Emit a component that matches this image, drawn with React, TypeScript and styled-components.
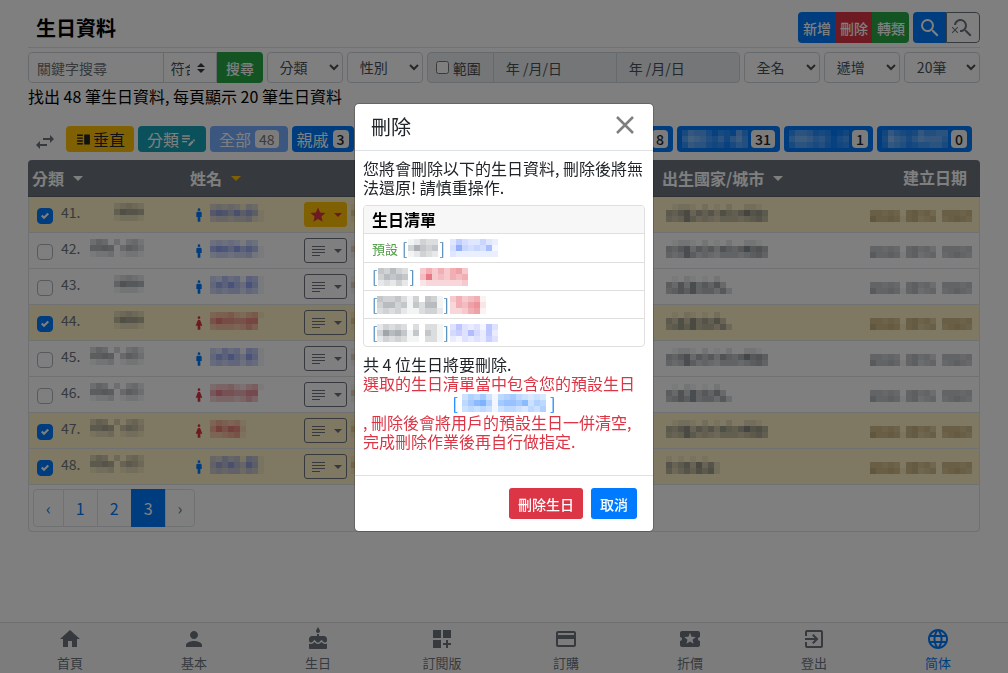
import React from 'react';
import styled, { createGlobalStyle, css } from 'styled-components';
import {
  MdArrowDropDown,
  MdCake,
  MdCreditCard,
  MdDashboardCustomize,
  MdEditNote,
  MdExitToApp,
  MdHome,
  MdLanguage,
  MdLocalActivity,
  MdMan,
  MdPerson,
  MdSearch,
  MdSearchOff,
  MdStar,
  MdSwapHoriz,
  MdVerticalSplit,
  MdWoman,
} from 'react-icons/md';

const blue = '#007bff';
const red = '#dc3545';
const green = '#28a745';
const yellow = '#ffc107';
const teal = '#17a2b8';
const gray = '#6c757d';
const line = '#dee2e6';
const field = '#ced4da';

const GlobalStyle = createGlobalStyle`
  * { box-sizing: border-box; }
  body {
    margin: 0;
    background: #fff;
    color: #212529;
    font: 400 16px/24px "Noto Sans CJK TC", sans-serif;
  }
  button, input, select { font-family: inherit; margin: 0; }
  button { cursor: pointer; }
`;

/* ---------- censored text ---------- */

type MosaicProps = { rows: string[]; color: string };

/* Each hex digit is one cell; its value is the strength of the colour. */
const Mosaic = ({ rows, color }: MosaicProps) => (
  <MosaicSvg
    width={rows[0].length * 6}
    height={rows.length * 6}
    fill={color}
    shapeRendering="crispEdges"
    aria-hidden="true"
  >
    {rows.flatMap((row, y) =>
      row.split('').map((c, x) => (
        <rect key={`${x}-${y}`} x={x * 6} y={y * 6} width="6" height="6" opacity={parseInt(c, 16) / 15} />
      )),
    )}
  </MosaicSvg>
);

const MosaicSvg = styled.svg`
  display: block;
  flex: none;
`;

const ink = '#4d565e';
const categoryShort = ['23432', '58776', '12221'];
const categoryLong = ['354030342', '667604653', '122301221'];
const nameBlue = ['343431430', '798696861', '344344521'];
const nameBlueB = ['436451651', '586964961', '454553541'];
const nameRed = ['344532451', '697766880', '344434640'];
const nameRedB = ['354341', '596982', '334561'];
const countryLong = ['01221020102002210', '6579475748657a786', '54596454355545675'];
const countryMid = ['01021010200', '64849575840', '56869566473'];
const countryShort = ['101010100', '746849472', '635758682'];
const dateCells = ['66565067564066656', '86676167456056765'];
const sliver = ['121', '474', '121'];

/* ---------- page ---------- */

const Page = styled.main`
  padding: 12px 28px 80px;
`;

const Header = styled.header`
  display: flex;
  align-items: center;
  justify-content: space-between;
  padding-bottom: 4px;
  border-bottom: 1px solid #e5e5e5;
`;

const Title = styled.h1`
  margin: 0;
  padding-left: 8px;
  font-size: 20px;
  line-height: 31px;
  font-weight: 700;
  color: #000;
`;

const Actions = styled.div`
  display: flex;
  gap: 4px;
`;

const Group = styled.div`
  display: flex;
  border-radius: 4px;
  overflow: hidden;
`;

const ActionButton = styled.button<{ $color: string }>`
  height: 31px;
  padding: 0 4px 0 5px;
  border: 0;
  background: ${(p) => p.$color};
  color: #fff;
  font-size: 14px;
  font-weight: 500;
`;

const IconButton = styled.button<{ $outline?: boolean }>`
  display: grid;
  place-items: center;
  width: ${(p) => (p.$outline ? 34 : 33)}px;
  height: 31px;
  padding: 0;
  border: ${(p) => (p.$outline ? `1px solid ${gray}` : '0')};
  border-radius: ${(p) => (p.$outline ? '0 4px 4px 0' : '0')};
  background: ${(p) => (p.$outline ? '#fff' : blue)};
  color: ${(p) => (p.$outline ? gray : '#fff')};
`;

/* ---------- filters ---------- */

const Filters = styled.form`
  display: flex;
  gap: 4px;
  margin-top: 4px;
`;

const SearchGroup = styled(Group)`
  flex: 234 1 234px;
`;

const boxed = css`
  height: 31px;
  border: 1px solid ${field};
  background: #fff;
  color: #495057;
  font-size: 14px;
`;

const Keyword = styled.input`
  ${boxed}
  flex: 1;
  min-width: 0;
  padding: 0 8px;
  border-radius: 4px 0 0 4px;
  &::placeholder { color: ${gray}; }
`;

const MatchWrap = styled.div`
  position: relative;
  width: 54px;
  margin-left: -1px;
`;

const Match = styled.select`
  ${boxed}
  width: 100%;
  padding: 0 26px 0 7px;
  appearance: none;
  border-radius: 0;
`;

const MatchArrow = styled.svg`
  position: absolute;
  right: 12px;
  top: 11px;
  pointer-events: none;
`;

const SearchButton = styled(ActionButton)`
  width: 46px;
`;

const Select = styled.select`
  ${boxed}
  flex: 76 1 76px;
  min-width: 0;
  padding: 3px 0 5px 8px;
  border-radius: 4px;
`;

const RangeGroup = styled(Group)`
  flex: 312 1 312px;
`;

const RangeLabel = styled.label`
  ${boxed}
  display: flex;
  align-items: center;
  gap: 4px;
  width: 67px;
  padding: 0 8px;
  border-radius: 4px 0 0 4px;
  background: #e9ecef;
`;

const DateInput = styled.input`
  ${boxed}
  flex: 1;
  min-width: 0;
  margin-left: -1px;
  padding: 0 12px;
  border-radius: 0;
  background: #e9ecef;
  &:last-child { border-radius: 0 4px 4px 0; }
`;

const Summary = styled.p`
  margin: 1px 0 0;
  color: #000;
`;

/* ---------- category chips ---------- */

const Chips = styled.nav`
  display: flex;
  align-items: center;
  gap: 4px;
  margin-top: 18px;
  padding: 0 8px 0 5px;
`;

const SwapIcon = styled.span`
  display: flex;
  width: 29px;
  height: 26px;
  padding-top: 4px;
  color: ${gray};
`;

const Chip = styled.button<{ $color: string; $dark?: boolean; $wide?: boolean; $icon?: boolean; $grow?: boolean }>`
  display: flex;
  align-items: center;
  justify-content: ${(p) => (p.$grow ? 'space-between' : 'center')};
  gap: ${(p) => (p.$icon ? 1 : 4)}px;
  flex: ${(p) => (p.$grow ? '1 1 0' : 'none')};
  height: 26px;
  padding: 0 ${(p) => (p.$wide ? 9 : 5)}px;
  border: 0;
  border-radius: 4px;
  background: ${(p) => p.$color};
  color: ${(p) => (p.$dark ? '#212529' : '#fff')};
  font-size: 16px;
  & > svg + span { margin-left: -1px; }
`;

const Badge = styled.span<{ $muted?: boolean }>`
  padding: 0 4px;
  border-radius: 4px;
  background: #f8f9fa;
  color: ${(p) => (p.$muted ? '#777' : '#212529')};
  font-size: 14px;
  line-height: 18px;
  font-weight: ${(p) => (p.$muted ? 400 : 500)};
`;

/* ---------- table ---------- */

const Table = styled.table`
  width: 100%;
  margin-top: 8px;
  table-layout: fixed;
  border-collapse: separate;
  border-spacing: 0;
`;

const HeadCell = styled.th<{ $width?: number; $right?: boolean }>`
  width: ${(p) => (p.$width ? `${p.$width}px` : 'auto')};
  height: 37px;
  padding: 0 ${(p) => (p.$right ? 13 : 4)}px 0 4px;
  background: ${gray};
  border-bottom: 1px solid #5a6268;
  color: #fff;
  font-weight: 700;
  text-align: ${(p) => (p.$right ? 'right' : 'left')};
  &:first-child { border-top-left-radius: 4px; }
  &:last-child { border-top-right-radius: 4px; padding-bottom: 3px; }
`;

const Sort = styled.span<{ $active?: boolean }>`
  display: flex;
  align-items: center;
  gap: 2px;
  svg { color: ${(p) => (p.$active ? yellow : '#fff')}; }
`;

const Row = styled.tr<{ $selected: boolean }>`
  background: ${(p) => (p.$selected ? '#fff0c4' : '#fff')};
`;

const Cell = styled.td`
  height: 36px;
  padding: 0 8px;
  border-bottom: 1px solid ${line};
  &:first-child { border-left: 1px solid ${line}; }
  &:last-child { border-right: 1px solid ${line}; }
`;

const DetailCell = styled(Cell)`
  padding: 0 0 4px 1px;
`;

const CountryCell = styled(Cell)`
  padding-bottom: 4px;
`;

const DateCell = styled(Cell)`
  padding: 2px 7px 0 0;
  & > svg { margin-left: auto; }
`;

const CategoryCell = styled.label`
  display: flex;
  align-items: center;
  width: 107px;
  padding-bottom: 5px;
  color: ${gray};
  font-size: 14px;
  & > svg { margin-left: auto; }
`;

const CheckWrap = styled.span`
  position: relative;
  display: block;
  width: 16px;
  height: 16px;
  margin: 8px 8px 0 0;
`;

const CheckInput = styled.input`
  appearance: none;
  display: block;
  width: 16px;
  height: 16px;
  border: 1px solid #adb5bd;
  border-radius: 4px;
  background: #fff;
  &:checked { background: ${blue}; border-color: ${blue}; }
`;

const CheckMark = styled.svg`
  position: absolute;
  left: 4px;
  top: 4px;
  pointer-events: none;
`;

const NameCell = styled.div<{ $color: string }>`
  display: flex;
  align-items: center;
  gap: 3px;
  margin-left: -3px;
  padding-bottom: 4px;
  color: ${(p) => p.$color};
`;

const Figure = styled.span`
  display: flex;
  padding-top: 4px;
`;

const MenuButton = styled.button<{ $star?: boolean }>`
  display: flex;
  align-items: center;
  justify-content: space-between;
  width: 43px;
  height: 25px;
  padding: 0 4px 0 ${(p) => (p.$star ? 4 : 7)}px;
  border: 1px solid ${(p) => (p.$star ? yellow : gray)};
  border-radius: 3px;
  background: ${(p) => (p.$star ? yellow : 'transparent')};
  color: ${(p) => (p.$star ? red : gray)};
`;

const TableFooter = styled.div`
  padding: 4px;
  border: 1px solid ${line};
  border-top: 0;
  border-radius: 0 0 4px 4px;
`;

const Pages = styled.nav`
  display: flex;
`;

const PageLink = styled.a<{ $active?: boolean; $muted?: boolean }>`
  padding: 8px 12px;
  border: 1px solid ${(p) => (p.$active ? blue : line)};
  background: ${(p) => (p.$active ? blue : '#fff')};
  color: ${(p) => (p.$active ? '#fff' : p.$muted ? gray : blue)};
  line-height: 20px;
  text-decoration: none;
  & + & { margin-left: -1px; }
  &:first-child { border-radius: 4px 0 0 4px; }
  &:last-child { border-radius: 0 4px 4px 0; }
`;

/* ---------- bottom navigation ---------- */

const BottomNav = styled.nav`
  position: fixed;
  inset: auto 0 0;
  display: flex;
  height: 51px;
  padding: 4px 8px 0;
  background: #f8f9fa;
  border-top: 1px solid #dfdfdf;
`;

const NavItem = styled.a<{ $active?: boolean }>`
  flex: 1;
  display: flex;
  flex-direction: column;
  align-items: center;
  gap: 3px;
  color: ${(p) => (p.$active ? blue : gray)};
  font-size: 13px;
  line-height: 18px;
  text-decoration: none;
`;

/* ---------- dialog ---------- */

const Backdrop = styled.div`
  position: fixed;
  inset: 0;
  z-index: 10;
  display: flex;
  justify-content: center;
  align-items: flex-start;
  padding-top: 103px;
  background: rgba(0, 0, 0, 0.5);
`;

const Dialog = styled.section`
  width: 300px;
  background: #fff;
  background-clip: padding-box;
  border: 1px solid rgba(0, 0, 0, 0.2);
  border-radius: 5px;
`;

const DialogHeader = styled.header`
  display: flex;
  justify-content: space-between;
  align-items: center;
  padding: 8px 16px;
  border-bottom: 1px solid ${line};
`;

const DialogTitle = styled.h2`
  margin: 0;
  font-size: 20px;
  line-height: 30px;
  font-weight: 400;
`;

const Close = styled.button`
  display: grid;
  padding: 0 3px 4px;
  border: 0;
  background: none;
  color: #7f7f7f;
`;

const DialogBody = styled.div`
  padding: 8px 8px 24px;
  line-height: 19px;
`;

const Text = styled.p<{ $danger?: boolean }>`
  margin: 0;
  color: ${(p) => (p.$danger ? red : '#212529')};
`;

const List = styled.div`
  margin: 8px 0;
  border: 1px solid #dfdfdf;
  border-radius: 4px;
  overflow: hidden;
`;

const ListTitle = styled.h3`
  margin: 0;
  padding: 0 8px;
  background: #f7f7f7;
  color: #000;
  font-size: 16px;
  line-height: 27px;
  font-weight: 700;
`;

const ListItem = styled.div<{ $preset?: boolean; $tight: boolean }>`
  display: flex;
  align-items: center;
  height: ${(p) => (p.$preset ? 29 : 28)}px;
  padding: 0 8px;
  border-top: 1px solid #dfdfdf;
  color: #4a86b8;
  & > svg { margin: 0 ${(p) => (p.$tight ? 0 : 1)}px; }
  & > svg:last-child { margin-left: ${(p) => (p.$tight ? 1 : 5)}px; }
`;

const Preset = styled.span`
  margin-right: 4px;
  color: #4f9d45;
  font-size: 13px;
`;

const PresetButton = styled.button`
  display: flex;
  align-items: center;
  gap: 4px;
  margin: 0 auto;
  padding: 0;
  border: 0;
  background: none;
  color: ${blue};
  font-size: 16px;
  line-height: 20px;
`;

const DialogFooter = styled.footer`
  display: flex;
  justify-content: flex-end;
  gap: 8px;
  padding: 12px 16px;
  border-top: 1px solid ${line};
`;

const DialogButton = styled(ActionButton)`
  padding: 0 9px;
  border-radius: 3px;
`;

/* ---------- data ---------- */

type Person = {
  no: number;
  selected: boolean;
  female?: boolean;
  star?: boolean;
  category: string[];
  name: string[];
  country: string[];
};

const people: Person[] = [
  { no: 41, selected: true, star: true, category: categoryShort, name: nameBlue, country: countryLong },
  { no: 42, selected: false, category: categoryLong, name: nameBlue, country: countryLong },
  { no: 43, selected: false, category: categoryShort, name: nameBlueB, country: countryMid },
  { no: 44, selected: true, female: true, category: categoryShort, name: nameRed, country: countryMid },
  { no: 45, selected: false, category: categoryLong, name: nameBlueB, country: countryLong },
  { no: 46, selected: false, female: true, category: categoryLong, name: nameRed, country: countryMid },
  { no: 47, selected: true, female: true, category: categoryLong, name: nameRedB, country: countryLong },
  { no: 48, selected: true, category: categoryLong, name: nameBlueB, country: countryShort },
];

const victims = [
  { preset: true, category: ['12433', '47545', '12432'], name: ['36433532', '4a545481', '32222222'], color: '#5c86ff' },
  { category: ['54643', '46565', '23242'], name: ['46464674', '5a454656', '23333334'], color: red },
  { category: ['54453140541', '46645153661', '34342113442'], name: ['464561', '365782', '334671'], color: red },
  { category: ['24343030331', '48675150531', '24343110331'], name: ['36323163', '45374262', '21323253'], color: '#5c70ff' },
];

const navItems = [
  { label: '首頁', Icon: MdHome },
  { label: '基本', Icon: MdPerson },
  { label: '生日', Icon: MdCake },
  { label: '訂閱版', Icon: MdDashboardCustomize },
  { label: '訂購', Icon: MdCreditCard },
  { label: '折價', Icon: MdLocalActivity },
  { label: '登出', Icon: MdExitToApp },
  { label: '简体', Icon: MdLanguage, active: true },
];

const LinesIcon = () => (
  <svg width="13" height="10" fill="currentColor" shapeRendering="crispEdges">
    <path d="M0 0h13v1H0zM0 3h13v1H0zM0 6h13v1H0zM0 9h8v1H0z" />
  </svg>
);

const Caret = () => (
  <svg width="8" height="4" viewBox="0 0 8 4" fill="currentColor">
    <path d="M0 0h8L4 4z" />
  </svg>
);

const PersonRow = ({ p }: { p: Person }) => (
  <Row $selected={p.selected}>
    <Cell>
      <CategoryCell>
        <CheckWrap>
          <CheckInput type="checkbox" defaultChecked={p.selected} />
          {p.selected && (
            <CheckMark width="8" height="8" viewBox="0 0 8 8" fill="#fff">
              <path d="M6.564.75l-3.59 3.612-1.538-1.55L0 4.26 2.974 7.25 8 2.193z" />
            </CheckMark>
          )}
        </CheckWrap>
        {p.no}.
        <Mosaic rows={p.category} color={ink} />
      </CategoryCell>
    </Cell>
    <Cell>
      <NameCell $color={p.female ? red : blue}>
        <Figure>{p.female ? <MdWoman size={16} /> : <MdMan size={16} />}</Figure>
        <Mosaic rows={p.name} color={p.female ? red : '#4b68e8'} />
      </NameCell>
    </Cell>
    <Cell>
      <MenuButton type="button" $star={p.star} aria-label="選單">
        {p.star ? <MdStar size={18} /> : <LinesIcon />}
        <Caret />
      </MenuButton>
    </Cell>
    <DetailCell>
      <Mosaic rows={sliver} color="#a06010" />
    </DetailCell>
    <CountryCell>
      <Mosaic rows={p.country} color={ink} />
    </CountryCell>
    <DateCell>
      <Mosaic rows={dateCells} color={p.selected ? '#8f7440' : gray} />
    </DateCell>
  </Row>
);

export default function App() {
  return (
    <>
      <GlobalStyle />
      <Page>
        <Header>
          <Title>生日資料</Title>
          <Actions>
            <Group>
              <ActionButton $color={blue}>新增</ActionButton>
              <ActionButton $color={red}>刪除</ActionButton>
              <ActionButton $color={green}>轉類</ActionButton>
            </Group>
            <Group>
              <IconButton aria-label="搜尋"><MdSearch size={24} /></IconButton>
              <IconButton $outline aria-label="清除搜尋"><MdSearchOff size={24} /></IconButton>
            </Group>
          </Actions>
        </Header>

        <Filters onSubmit={(e) => e.preventDefault()}>
          <SearchGroup>
            <Keyword placeholder="關鍵字搜尋" aria-label="關鍵字搜尋" />
            <MatchWrap>
              <Match aria-label="符合方式"><option>符合</option></Match>
              <MatchArrow width="8" height="10" viewBox="0 0 4 5" fill="#343a40">
                <path d="M2 0L0 2h4zm0 5L0 3h4z" />
              </MatchArrow>
            </MatchWrap>
            <SearchButton $color={green}>搜尋</SearchButton>
          </SearchGroup>
          <Select aria-label="分類"><option>分類</option></Select>
          <Select aria-label="性別"><option>性別</option></Select>
          <RangeGroup>
            <RangeLabel><input type="checkbox" />範圍</RangeLabel>
            <DateInput readOnly aria-label="開始日期" value="年 /月/日" />
            <DateInput readOnly aria-label="結束日期" value="年 /月/日" />
          </RangeGroup>
          <Select aria-label="名稱"><option>全名</option></Select>
          <Select aria-label="排序"><option>遞增</option></Select>
          <Select aria-label="每頁筆數"><option>20筆</option></Select>
        </Filters>
        <Summary>找出 48 筆生日資料, 每頁顯示 20 筆生日資料</Summary>

        <Chips>
          <SwapIcon><MdSwapHoriz size={24} /></SwapIcon>
          <Chip $color={yellow} $dark $wide $icon><MdVerticalSplit size={17} />垂直</Chip>
          <Chip $color={teal} $wide $icon>分類<MdEditNote size={17} /></Chip>
          <Chip $color="#76acff" $wide>全部<Badge $muted>48</Badge></Chip>
          <Chip $color={blue}>親戚<Badge>3</Badge></Chip>
          <Chip $color={blue} $grow><Mosaic rows={['4565', '5665', '3454']} color="#fff" /><Badge>5</Badge></Chip>
          <Chip $color={blue} $grow><Mosaic rows={['4565', '5665', '3454']} color="#fff" /><Badge>8</Badge></Chip>
          <Chip $color={blue}><Mosaic rows={['36553132163', '58764352574', '36553231354']} color="#fff" /><Badge>31</Badge></Chip>
          <Chip $color={blue}><Mosaic rows={['3554232012', '5776453134', '3554342123']} color="#fff" /><Badge>1</Badge></Chip>
          <Chip $color={blue}><Mosaic rows={['26432364455', '38653576664', '26542344553']} color="#fff" /><Badge>0</Badge></Chip>
        </Chips>

        <Table>
          <thead>
            <tr>
              <HeadCell $width={158}><Sort>分類<MdArrowDropDown size={24} /></Sort></HeadCell>
              <HeadCell $width={110}><Sort $active>姓名<MdArrowDropDown size={24} /></Sort></HeadCell>
              <HeadCell $width={54} />
              <HeadCell />
              <HeadCell $width={200}><Sort>出生國家/城市<MdArrowDropDown size={24} /></Sort></HeadCell>
              <HeadCell $width={122} $right>建立日期</HeadCell>
            </tr>
          </thead>
          <tbody>
            {people.map((p) => <PersonRow key={p.no} p={p} />)}
          </tbody>
        </Table>
        <TableFooter>
          <Pages aria-label="分頁">
            <PageLink href="#prev">‹</PageLink>
            <PageLink href="#1">1</PageLink>
            <PageLink href="#2">2</PageLink>
            <PageLink href="#3" $active>3</PageLink>
            <PageLink href="#next" $muted>›</PageLink>
          </Pages>
        </TableFooter>
      </Page>

      <BottomNav>
        {navItems.map(({ label, Icon, active }) => (
          <NavItem key={label} href="#nav" $active={active}>
            <Icon size={24} />
            {label}
          </NavItem>
        ))}
      </BottomNav>

      <Backdrop>
        <Dialog role="dialog" aria-modal="true" aria-labelledby="dialog-title">
          <DialogHeader>
            <DialogTitle id="dialog-title">刪除</DialogTitle>
            <Close aria-label="關閉">
              <svg width="18" height="18" viewBox="0 0 18 18" stroke="currentColor" strokeWidth="2.5" fill="none">
                <path d="M1 1l16 16M17 1L1 17" />
              </svg>
            </Close>
          </DialogHeader>
          <DialogBody>
            <Text>您將會刪除以下的生日資料, 刪除後將無法還原! 請慎重操作.</Text>
            <List>
              <ListTitle>生日清單</ListTitle>
              {victims.map((v, i) => (
                <ListItem key={i} $preset={v.preset} $tight={v.category[0].length > 5}>
                  {v.preset && <Preset>預設</Preset>}
                  [<Mosaic rows={v.category} color={ink} />]
                  <Mosaic rows={v.name} color={v.color} />
                </ListItem>
              ))}
            </List>
            <Text>共 4 位生日將要刪除.</Text>
            <Text $danger>選取的生日清單當中包含您的預設生日</Text>
            <PresetButton>
              [<Mosaic rows={['46574156754343', '579a6178879465', '45454145543546']} color="#3c8dff" />]
            </PresetButton>
            <Text $danger>, 刪除後會將用戶的預設生日一併清空, 完成刪除作業後再自行做指定.</Text>
          </DialogBody>
          <DialogFooter>
            <DialogButton $color={red}>刪除生日</DialogButton>
            <DialogButton $color={blue}>取消</DialogButton>
          </DialogFooter>
        </Dialog>
      </Backdrop>
    </>
  );
}
